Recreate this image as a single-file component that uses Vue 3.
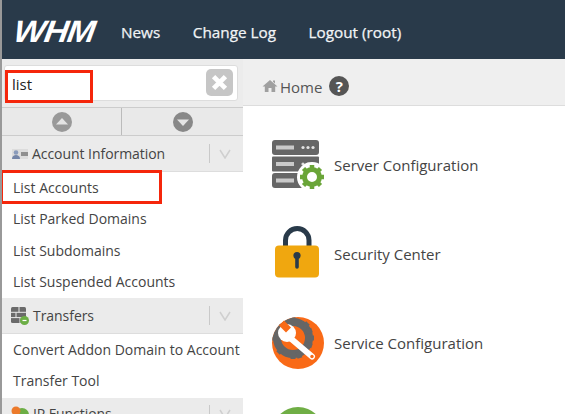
<script setup>
const tools = [
  { label: 'Server Configuration', icon: 'server' },
  { label: 'Security Center', icon: 'lock' },
  { label: 'Service Configuration', icon: 'wrench' },
]
</script>

<template>
  <div class="page">
    <header class="top">
      <span class="logo">WHM</span>
      <nav class="nav">
        <a>News</a>
        <a>Change Log</a>
        <a>Logout (root)</a>
      </nav>
    </header>
    <div class="body">
      <aside class="side">
        <div class="search">
          <div class="field">
            <span class="query">list</span>
            <span class="clear">
              <svg viewBox="0 0 16 16" width="19" height="19"><path d="M3 3l10 10M13 3L3 13" stroke="#fff" stroke-width="4"/></svg>
            </span>
            <span class="mark query-mark"></span>
          </div>
        </div>
        <div class="arrows">
          <button class="arrow first">
            <svg viewBox="0 0 20 20" width="20" height="20"><circle cx="10" cy="10" r="10" fill="#999"/><path d="M10 6l6 6.5H4z" fill="#e4e4e4"/></svg>
          </button>
          <button class="arrow">
            <svg viewBox="0 0 20 20" width="20" height="20"><circle cx="10" cy="10" r="10" fill="#888"/><path d="M10 14L4 7.500h12z" fill="#e4e4e4"/></svg>
          </button>
        </div>

        <div class="group">
          <svg class="gicon" viewBox="0 0 17 12" width="17" height="12"><rect x="1" y="1" width="16" height="10" fill="#dcdcdc"/><circle cx="5" cy="4.500" r="2.300" fill="#8a9bbb"/><path d="M1 11c0-3 2-4 4-4s4 1 4 4z" fill="#7485a8"/><rect x="10" y="4" width="7" height="4" fill="#8f8f8f"/></svg>
          <span class="gtitle">Account Information</span>
          <span class="chev"><svg viewBox="0 0 12 10" width="12" height="10"><path d="M1 1l5 8 5-8" fill="none" stroke="#cfcfcf" stroke-width="1.500"/></svg></span>
        </div>
        <ul class="items">
          <li class="hit">List Accounts<span class="mark item-mark"></span></li>
          <li>List Parked Domains</li>
          <li>List Subdomains</li>
          <li>List Suspended Accounts</li>
        </ul>

        <div class="group">
          <svg class="gicon" viewBox="0 0 18 18" width="18" height="18"><rect x="0" y="0" width="15" height="16" rx="1.500" fill="#6a6a6a"/><path d="M0 5.300h15M0 10.600h15M8 0v5.300M5 5.300v5.300M9 10.600V16" stroke="#e9e9e9" stroke-width="1"/><circle cx="13.500" cy="13.500" r="4.500" fill="#6cae45"/><path d="M11.500 13.500h4" stroke="#fff" stroke-width="1.200"/></svg>
          <span class="gtitle">Transfers</span>
          <span class="chev"><svg viewBox="0 0 12 10" width="12" height="10"><path d="M1 1l5 8 5-8" fill="none" stroke="#cfcfcf" stroke-width="1.500"/></svg></span>
        </div>
        <ul class="items">
          <li>Convert Addon Domain to Account</li>
          <li>Transfer Tool</li>
        </ul>

        <div class="group last">
          <svg class="gicon" viewBox="0 0 18 18" width="18" height="18"><circle cx="11" cy="10" r="7" fill="#6cae45"/><circle cx="5" cy="6" r="4.500" fill="#ec7a2b"/></svg>
          <span class="gtitle">IP Functions</span>
          <span class="chev"><svg viewBox="0 0 12 10" width="12" height="10"><path d="M1 1l5 8 5-8" fill="none" stroke="#cfcfcf" stroke-width="1.500"/></svg></span>
        </div>
      </aside>

      <main class="main">
        <div class="crumbs">
          <svg viewBox="0 0 16 14" width="16" height="14"><path d="M8 1L0.500 7.500h2.300V13h3.700V9h3v4h3.700V7.500h2.300zM11 1.500h2v3l-2-1.700z" fill="#a0a0a0"/></svg>
          <span class="home">Home</span>
          <span class="help">?</span>
        </div>
        <div class="tools">
          <div v-for="t in tools" :key="t.label" class="tool">
            <span class="ticon">
              <svg v-if="t.icon === 'server'" viewBox="0 0 53 50" width="53" height="50">
                <rect x="0" y="0" width="47" height="15" rx="3" fill="#666"/>
                <rect x="0" y="16.500" width="47" height="15" rx="1" fill="#666"/>
                <rect x="0" y="33" width="47" height="15" rx="3" fill="#666"/>
                <rect x="4" y="5.500" width="18" height="4" fill="#c9c9c9"/>
                <rect x="4" y="22" width="18" height="4" fill="#c9c9c9"/>
                <rect x="4" y="38.500" width="18" height="4" fill="#c9c9c9"/>
                <g fill="#e2e2e2"><circle cx="31" cy="7.500" r="1.600"/><circle cx="36" cy="7.500" r="1.600"/><circle cx="41" cy="7.500" r="1.600"/><circle cx="31" cy="24" r="1.600"/><circle cx="36" cy="24" r="1.600"/></g>
                <circle cx="40" cy="37" r="15" fill="#fff"/>
                <circle cx="40" cy="37" r="7.500" fill="none" stroke="#6aa538" stroke-width="5"/>
                <path d="M40 25v5M40 44v5M28 37h5M47 37h5M31.500 28.500l3.500 3.500M45 42l3.500 3.500M48.500 28.500L45 32M35 42l-3.500 3.500" stroke="#6aa538" stroke-width="4.500"/>
              </svg>
              <svg v-else-if="t.icon === 'lock'" class="lock" viewBox="0 0 44 52" width="44" height="52">
                <path d="M10.500 20V14.250a11.750 11.750 0 0 1 23.500 0V20" fill="none" stroke="#293a4a" stroke-width="5"/>
                <rect x="0" y="19.500" width="44" height="32" rx="4" fill="#f0a70f"/>
                <circle cx="22" cy="29.500" r="3.600" fill="#293a4a"/>
                <path d="M22 30v11" stroke="#293a4a" stroke-width="3.600" stroke-linecap="round"/>
              </svg>
              <svg v-else viewBox="0 0 52 52" width="52" height="52">
                <defs>
                  <clipPath id="disc"><circle cx="26" cy="26" r="26"/></clipPath>
                </defs>
                <circle cx="26" cy="26" r="26" fill="#f96a17"/>
                <g clip-path="url(#disc)">
                  <circle cx="21" cy="21" r="16" fill="none" stroke="#666" stroke-width="8"/>
                  <path d="M21 0v6M36 6l-4 4M42 21h-6M36 36l-4-4M21 42v-6M6 36l4-4M0 21h6M28 41l-2-6M40 29l-6-2M40 13l-6 2" stroke="#666" stroke-width="5"/>
                </g>
                <path d="M17 20l23 19.500" stroke="#fff" stroke-width="6" stroke-linecap="round"/>
                <circle cx="15" cy="16" r="9" fill="#fff"/>
                <path d="M14 15.500L7 8.500 12 3.500l7 7z" fill="#f96a17"/>
                <circle cx="40" cy="39.500" r="1.700" fill="#f96a17"/>
              </svg>
            </span>
            <span class="tlabel">{{ t.label }}</span>
          </div>
          <div class="tool partial">
            <span class="ticon"><span class="green"></span></span>
          </div>
        </div>
      </main>
    </div>
  </div>
</template>

<style>
html, body { margin: 0; background: #fff; overflow: hidden; }
</style>

<style scoped>
.page {
  width: 565px;
  height: 414px;
  overflow: hidden;
  display: flex;
  flex-direction: column;
  font-family: "Open Sans", sans-serif;
  color: #444;
  border-left: 2px solid #999;
  box-sizing: border-box;
}
.top {
  height: 59px;
  flex: none;
  background: #293a4a;
  display: flex;
  align-items: center;
  padding: 4px 0 0 12px;
  box-sizing: border-box;
}
.logo {
  width: 107px;
  font: italic 700 31px/1 "Liberation Sans", sans-serif;
  color: #fff;
  letter-spacing: -1px;
  display: block;
  transform: scaleX(1.08) skewX(-8deg);
  transform-origin: left center;
}
.nav {
  display: flex;
  gap: 32.5px;
  color: #f2f4f6;
  font-size: 15.3px;
  font-weight: 500;
  -webkit-text-stroke: 0.25px #f2f4f6;
}
.body {
  flex: 1;
  display: flex;
  min-height: 0;
}
.side {
  width: 241px;
  flex: none;
  background: #fff;
  overflow: hidden;
  position: relative;
}
.search {
  height: 48px;
  background: #ececec;
  padding: 6px 5px 6px 2px;
  box-sizing: border-box;
}
.field {
  position: relative;
  height: 36px;
  background: #fff;
  border: 1px solid #ddd;
  border-radius: 3px;
  box-sizing: border-box;
  display: flex;
  align-items: center;
  justify-content: space-between;
  padding: 0 4px 0 7px;
}
.query { font-size: 15px; color: #222; margin-top: 2px; }
.clear {
  width: 27px;
  height: 27px;
  margin-top: -2px;
  border-radius: 5px;
  background: #c6c6c6;
  display: flex;
  align-items: center;
  justify-content: center;
}
.mark {
  position: absolute;
  border: 3px solid #f5260b;
  box-sizing: border-box;
  pointer-events: none;
}
.query-mark { left: 0; top: 4px; width: 88px; height: 33px; z-index: 2; }
.arrows {
  height: 29px;
  display: flex;
  background: #e9e9e9;
  border-top: 1px solid #ccc;
  border-bottom: 1px solid #ccc;
  box-sizing: border-box;
}
.arrow {
  flex: 1;
  border: 0;
  padding: 0;
  background: none;
  display: flex;
  align-items: center;
  justify-content: center;
}
.arrow.first { flex: none; width: 119px; }
.arrow + .arrow { border-left: 1px solid #bbb; }
.group {
  height: 36px;
  background: #ebebeb;
  border-bottom: 1px solid #ddd;
  box-sizing: border-box;
  display: flex;
  align-items: center;
  padding-left: 9px;
  font-size: 14px;
}
.group.last { align-items: flex-start; padding-top: 7px; }
.gicon { flex: none; margin-right: 4px; }
.gtitle { flex: 1; color: #444; letter-spacing: -0.05px; margin-top: -1px; }
.chev {
  width: 34px;
  height: 19px;
  padding-right: 3px;
  box-sizing: border-box;
  border-left: 1px solid #c9c9c9;
  display: flex;
  align-items: center;
  justify-content: center;
  flex: none;
}
.items { list-style: none; margin: 0; padding: 1px 0 0; }
.items li {
  position: relative;
  height: 31.25px;
  line-height: 30px;
  padding-left: 11px;
  font-size: 14px;
  color: #444;
  white-space: nowrap;
}
.item-mark { left: -2px; top: -3px; width: 162px; height: 34px; z-index: 2; }
.main { flex: 1; min-width: 0; background: #fff; }
.crumbs {
  height: 47px;
  background: #efefef;
  border-bottom: 1px solid #ddd;
  display: flex;
  align-items: center;
  padding: 8px 0 0 19px;
  font-size: 15px;
  box-sizing: border-box;
}
.home { margin-left: 2px; color: #555; margin-top: 1px; }
.help {
  width: 20px;
  height: 20px;
  margin: -1px 0 0 7px;
  border-radius: 50%;
  background: #555;
  color: #fff;
  font-weight: 700;
  font-size: 15px;
  display: flex;
  align-items: center;
  justify-content: center;
}
.tools { padding: 14px 0 0 29px; }
.tool {
  display: flex;
  align-items: center;
  height: 89px;
}
.ticon {
  width: 62px;
  flex: none;
  display: flex;
}
.lock { margin: -3px 0 0 3px; }
.tlabel { font-size: 15px; color: #444; }
.green {
  width: 52px;
  height: 52px;
  border-radius: 50%;
  background: #6fae45;
  margin-top: 20px;
}
.partial { align-items: flex-start; }
</style>
